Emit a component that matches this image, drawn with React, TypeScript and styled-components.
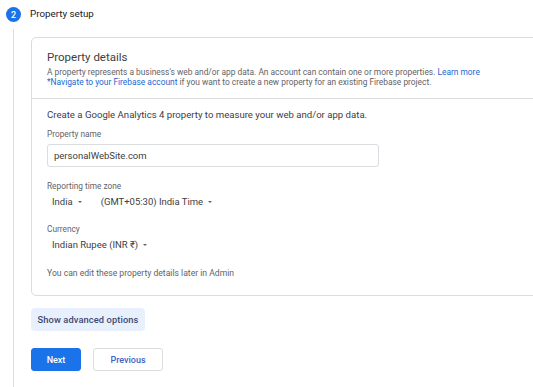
import styled, { createGlobalStyle } from "styled-components";

const Global = createGlobalStyle`
  html, body { margin: 0; padding: 0; background: #fff; overflow: hidden; }
  body { font-family: Roboto, "Noto Sans", Arial, sans-serif; color: #202124; }
`;

const Page = styled.div`
  display: grid;
  grid-template-columns: 28px 1fr;
  width: 533px;
  height: 387px;
`;

const Rail = styled.div`
  display: flex;
  flex-direction: column;
  align-items: center;
  padding-top: 7px;
  padding-right: 1px;
`;

const StepDot = styled.div`
  width: 15px;
  height: 15px;
  border-radius: 50%;
  background: #1a73e8;
  color: #fff;
  font-size: 9px;
  font-weight: 500;
  display: flex;
  align-items: center;
  justify-content: center;
`;

const RailLine = styled.div`
  width: 1px;
  flex: 1;
  background: #dadce0;
  margin-top: 7px;
`;

const Main = styled.div`
  display: flex;
  flex-direction: column;
  padding-left: 3px;
`;

const StepTitle = styled.div`
  font-size: 9.8px;
  height: 28px;
  line-height: 28px;
  color: #202124;
  margin-left: -1px;
`;

const Card = styled.div`
  margin-top: 9px;
  width: 520px;
  border: 1px solid #dadce0;
  border-radius: 5px;
  box-sizing: border-box;
`;

const CardHead = styled.div`
  padding: 10px 15px 11px;
  border-bottom: 1px solid #dadce0;
`;

const HeadTitle = styled.div`
  font-size: 11.5px;
  line-height: 18px;
  color: #3c4043;
`;

const HeadDesc = styled.div`
  font-size: 8.4px;
  line-height: 10px;
  color: #5f6368;
  margin-top: 1px;
  white-space: nowrap;
`;

const Link = styled.span`
  color: #1967d2;
`;

const CardBody = styled.div`
  padding: 9px 15px 17px;
  display: flex;
  flex-direction: column;
`;

const Intro = styled.div`
  font-size: 9.6px;
  line-height: 13px;
  color: #3c4043;
`;

const Label = styled.div<{ $top: number }>`
  font-size: 8.3px;
  line-height: 10px;
  color: #5f6368;
  margin-top: ${(p) => p.$top}px;
`;

const Input = styled.div`
  margin-top: 5px;
  width: 332px;
  height: 23px;
  box-sizing: border-box;
  border: 1px solid #dadce0;
  border-radius: 3px;
  padding-left: 6px;
  display: flex;
  align-items: center;
  font-size: 9.5px;
  color: #3c4043;
`;

const SelectRow = styled.div`
  display: flex;
  gap: 19px;
  margin-top: 5px;
  padding-left: 5px;
`;

const Select = styled.div`
  font-size: 9.5px;
  line-height: 12px;
  color: #3c4043;
  display: flex;
  align-items: center;
  gap: 5px;
`;

const Caret = styled.span`
  display: inline-block;
  width: 0;
  height: 0;
  border-left: 2.5px solid transparent;
  border-right: 2.5px solid transparent;
  border-top: 2.5px solid #5f6368;
`;

const Footnote = styled.div`
  font-size: 8.6px;
  line-height: 10px;
  color: #5f6368;
  margin-top: 17px;
`;

const AdvancedButton = styled.div`
  margin-top: 12px;
  width: 114px;
  height: 23px;
  border-radius: 4px;
  background: #e8f0fe;
  color: #3c4a72;
  font-size: 9.3px;
  font-weight: 500;
  display: flex;
  align-items: center;
  justify-content: center;
  letter-spacing: 0.1px;
`;

const Actions = styled.div`
  display: flex;
  gap: 12px;
  margin-top: 17px;
`;

const Button = styled.div<{ $primary?: boolean }>`
  height: 23px;
  box-sizing: border-box;
  border-radius: 3px;
  display: flex;
  align-items: center;
  justify-content: center;
  font-size: 9px;
  font-weight: 500;
  width: ${(p) => (p.$primary ? 50 : 70)}px;
  background: ${(p) => (p.$primary ? "#1a73e8" : "#fff")};
  color: ${(p) => (p.$primary ? "#fff" : "#4061c9")};
  border: 1px solid ${(p) => (p.$primary ? "#1a73e8" : "#dadce0")};
`;

export default function App() {
  return (
    <>
      <Global />
      <Page>
        <Rail>
          <StepDot>2</StepDot>
          <RailLine />
        </Rail>
        <Main>
          <StepTitle>Property setup</StepTitle>
          <Card>
            <CardHead>
              <HeadTitle>Property details</HeadTitle>
              <HeadDesc>
                A property represents a business's web and/or app data. An account can contain one or more properties.{" "}
                <Link>Learn more</Link>
                <br />
                <Link>*Navigate to your Firebase account</Link> if you want to create a new property for an existing Firebase project.
              </HeadDesc>
            </CardHead>
            <CardBody>
              <Intro>Create a Google Analytics 4 property to measure your web and/or app data.</Intro>
              <Label $top={8}>Property name</Label>
              <Input>personalWebSite.com</Input>
              <Label $top={14}>Reporting time zone</Label>
              <SelectRow>
                <Select>
                  India <Caret />
                </Select>
                <Select>
                  (GMT+05:30) India Time <Caret />
                </Select>
              </SelectRow>
              <Label $top={16}>Currency</Label>
              <SelectRow>
                <Select>
                  Indian Rupee (INR ₹) <Caret />
                </Select>
              </SelectRow>
              <Footnote>You can edit these property details later in Admin</Footnote>
            </CardBody>
          </Card>
          <AdvancedButton>Show advanced options</AdvancedButton>
          <Actions>
            <Button $primary>Next</Button>
            <Button>Previous</Button>
          </Actions>
        </Main>
      </Page>
    </>
  );
}
